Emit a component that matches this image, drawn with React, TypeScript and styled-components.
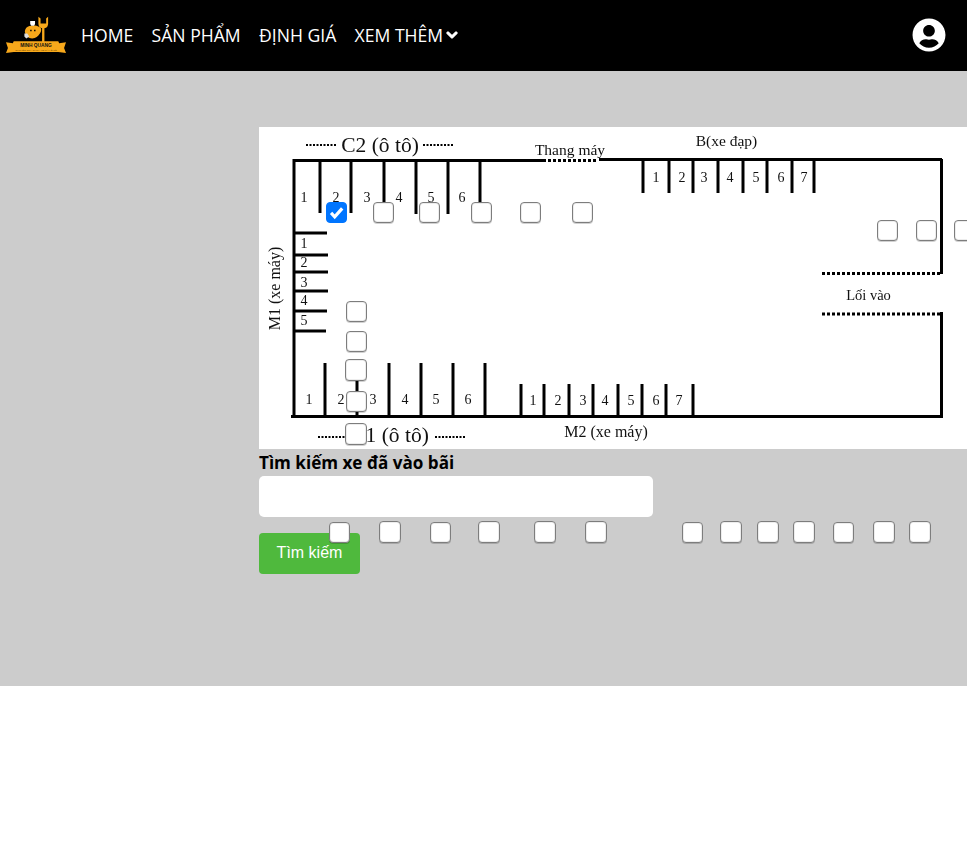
import React from "react";
import styled, { createGlobalStyle } from "styled-components";
import { FaChevronDown, FaUserCircle } from "react-icons/fa";

const Global = createGlobalStyle`
  html, body { margin: 0; padding: 0; background: #fff; overflow: hidden; }
  body { font-family: "Open Sans", "Noto Sans", sans-serif; }
  * { box-sizing: border-box; }
`;

const Page = styled.div`
  position: relative;
  width: 967px;
  height: 857px;
  overflow: hidden;
`;

const Header = styled.header`
  height: 71px;
  background: #000;
  display: flex;
  align-items: center;
  padding: 0 21px 2px 6px;
`;

const Logo = styled.svg`
  width: 60px;
  height: 43px;
  flex: none;
  margin-top: 1px;
`;

const Nav = styled.nav`
  display: flex;
  align-items: center;
  gap: 18.3px;
  margin-left: 15px;
  flex: 1;
`;

const NavLink = styled.a`
  color: #fff;
  font-size: 17.6px;
  line-height: 24px;
  display: inline-flex;
  align-items: center;
  gap: 3px;
  white-space: nowrap;
`;

const NavChevron = styled(FaChevronDown)`
  width: 12px;
  height: 12px;
  stroke: #fff;
  stroke-width: 50px;
`;

const Avatar = styled(FaUserCircle)`
  color: #fff;
  width: 34px;
  height: 34px;
`;

const Main = styled.main`
  height: 615px;
  background: #ccc;
  padding: 56px 0 0 259px;
`;

const Plan = styled.svg`
  display: block;
  width: 708px;
  height: 322px;
  background: #fff;
`;

const PlanLabels = styled.g`
  filter: grayscale(1);
`;

const Title = styled.h3`
  margin: 0;
  height: 27px;
  font-size: 17.1px;
  line-height: 27px;
  font-weight: 700;
  color: #000;
  white-space: nowrap;
`;

const SearchInput = styled.input`
  display: block;
  width: 394px;
  height: 41px;
  border: 0;
  border-radius: 5px;
  background: #fff;
  outline: none;
`;

const SearchButton = styled.button`
  display: block;
  width: 101px;
  height: 41px;
  margin-top: 16px;
  padding: 0 0 1px;
  border: 0;
  border-radius: 4px;
  background: #4fb93d;
  color: #fff;
  font-family: "Liberation Sans", Arial, sans-serif;
  font-size: 16px;
`;

const checkMark = encodeURIComponent(
  `<svg xmlns="http://www.w3.org/2000/svg" viewBox="0 0 21 21"><path d="M4.500 11l4 4.200L16.800 6" fill="none" stroke="#fff" stroke-width="3.600"/></svg>`
);

const Slot = styled.input.attrs<{ $x: number; $y: number; $s?: number }>((p) => ({
  type: "checkbox",
  style: { left: p.$x, top: p.$y, width: p.$s ?? 21, height: p.$s ?? 21 },
}))<{ $x: number; $y: number; $s?: number }>`
  position: absolute;
  margin: 0;
  appearance: none;
  background: #fff;
  border: 1px solid #7d7d7d;
  border-radius: 4px;
  box-shadow: inset 0 0 0 1px rgba(0, 0, 0, 0.07), 0 1px 0 rgba(0, 0, 0, 0.18);

  &:checked {
    background: #0075ff url("data:image/svg+xml,${checkMark}") center / 100% 100% no-repeat;
    border-color: #0075ff;
    box-shadow: none;
  }
`;

const LABEL = "'Liberation Serif', 'Noto Serif', serif";

const Wall = ({ d, w = 3 }: { d: string; w?: number }) => (
  <path d={d} fill="none" stroke="#000" strokeWidth={w} />
);

const Dots = ({ d, w = 3, dash = "3 2" }: { d: string; w?: number; dash?: string }) => (
  <path d={d} fill="none" stroke="#000" strokeWidth={w} strokeDasharray={dash} />
);

const L = ({ x, y, s = 14, children, r }: { x: number; y: number; s?: number; children: React.ReactNode; r?: boolean }) => (
  <text
    x={x}
    y={y}
    fontFamily={LABEL}
    fontSize={s}
    fill="#111"
    textAnchor="middle"
    transform={r ? `rotate(-90 ${x} ${y})` : undefined}
  >
    {children}
  </text>
);

const ox = 259;
const oy = 127;
const vLine = (x: number, y1: number, y2: number) => `M${x - ox} ${y1 - oy}V${y2 - oy}`;
const hLine = (y: number, x1: number, x2: number) => `M${x1 - ox} ${y - oy}H${x2 - ox}`;

const topStalls: [number, number][] = [[320, 213], [351, 213], [384, 205], [416, 214], [448, 214], [480, 205]];
const leftStalls: [number, number][] = [[233, 327], [255, 328], [272, 328], [291, 328], [311, 327], [331, 326]];
const bottomStalls = [325, 357, 389, 421, 453, 485];
const m2Stalls = [521, 544, 569, 593, 618, 642, 666, 693];
const bStalls = [643, 669, 693, 718, 743, 767, 792, 814];

const topNums = [304, 336, 367, 399, 431, 462];
const leftNums = [248, 267, 287, 305, 325];
const bottomNums = [309, 341, 373, 405, 436, 468];
const m2Nums = [533, 558, 583, 605, 631, 656, 679];
const bNums = [656, 682, 704, 730, 756, 781, 804];

type S = { x: number; y: number; s?: number };
const slots: S[] = [
  { x: 373, y: 202 }, { x: 419, y: 202 }, { x: 471, y: 202 }, { x: 520, y: 202 }, { x: 572, y: 202 },
  { x: 877, y: 220 }, { x: 916, y: 220 }, { x: 954, y: 220 },
  { x: 346, y: 301 }, { x: 346, y: 331 }, { x: 345, y: 359, s: 22 }, { x: 346, y: 391 }, { x: 345, y: 423, s: 22 },
  { x: 329, y: 522 }, { x: 379, y: 521, s: 22 }, { x: 430, y: 522 }, { x: 478, y: 521, s: 22 }, { x: 534, y: 521, s: 22 }, { x: 585, y: 521, s: 22 },
  { x: 682, y: 522 }, { x: 720, y: 521, s: 22 }, { x: 757, y: 521, s: 22 }, { x: 793, y: 521, s: 22 }, { x: 833, y: 522 }, { x: 873, y: 521, s: 22 }, { x: 909, y: 521, s: 22 },
];

export default function App() {
  return (
    <Page>
      <Global />
      <Header>
        <Logo viewBox="0 0 62 44" aria-label="logo">
          <path d="M33.500 2.500v7.500a5 5 0 0 0 3.800 4.600V30h2.400V14.600A5 5 0 0 0 43.500 10V2.500l-2 2v5h-5.800v-5z" fill="#f7a81b" />
          <path d="M21 14c3-3 10-3 13-1 3 1 3 4 1 7-2 3-4 5-8 5-4 0-6-2-7-5-1-2-.5-4 1-6z" fill="#f7a81b" />
          <path d="M25 7h5v3l-1 2h-3l-1-2z" fill="#fff" />
          <path d="M25 16h1.500v1.500H25zM29 16h1.500v1.500H29z" fill="#000" />
          <path d="M19 20h3l2 3-3 2-2-2z" fill="#ddd" />
          <path d="M0 29l7 1 1-2h46l1 2 7-1-2 6 2 5-8-1H8l-8 1 2-5z" fill="#f7a81b" />
          <text x="31" y="34" fontFamily="'Liberation Sans', sans-serif" fontSize="5" fontWeight="700" textAnchor="middle" fill="#111">
            MINH QUANG
          </text>
          <text x="31" y="38" fontFamily="'Liberation Sans', sans-serif" fontSize="2.600" textAnchor="middle" fill="#5a3c00">
            CHUYÊN SỬA CHỮA XE MÁY Ô TÔ
          </text>
        </Logo>
        <Nav>
          <NavLink>HOME</NavLink>
          <NavLink>SẢN PHẨM</NavLink>
          <NavLink>ĐỊNH GIÁ</NavLink>
          <NavLink>
            XEM THÊM
            <NavChevron />
          </NavLink>
        </Nav>
        <Avatar />
      </Header>
      <Main>
        <Plan viewBox="0 0 708 322">
          <Wall d={`${hLine(160.5, 293, 546)}${hLine(159.5, 599, 942)}${vLine(294, 159, 417)}${vLine(941.5, 159, 274)}${vLine(941.5, 312, 418)}${hLine(416.5, 291, 943)}`} />
          <Dots d={`${hLine(160.5, 548, 598)}${hLine(273.5, 822, 940)}${hLine(314, 822, 940)}`} />
          <Dots d={`${hLine(145, 306, 336)}${hLine(145, 423, 453)}${hLine(437, 318, 346)}${hLine(437, 435, 465)}`} w={2} dash="2 1.500" />
          {topStalls.map(([x, y]) => <Wall key={x} d={vLine(x, 160, y)} />)}
          {leftStalls.map(([y, x]) => <Wall key={y} d={hLine(y, 294, x)} />)}
          {bottomStalls.map((x) => <Wall key={x} d={vLine(x, 363, 417)} />)}
          {m2Stalls.map((x) => <Wall key={x} d={vLine(x, 384, 417)} />)}
          {bStalls.map((x) => <Wall key={x} d={vLine(x, 160, 193)} />)}

          <PlanLabels>
            {topNums.map((x, i) => <L key={x} x={x - ox} y={202 - oy}>{i + 1}</L>)}
            {leftNums.map((y, i) => <L key={y} x={304 - ox} y={y - oy}>{i + 1}</L>)}
            {bottomNums.map((x, i) => <L key={x} x={x - ox} y={404 - oy}>{i + 1}</L>)}
            {m2Nums.map((x, i) => <L key={x} x={x - ox} y={405 - oy}>{i + 1}</L>)}
            {bNums.map((x, i) => <L key={x} x={x - ox} y={182 - oy}>{i + 1}</L>)}

            <L x={380 - ox} y={152 - oy} s={21.5}>C2 (ô tô)</L>
            <L x={570 - ox} y={155 - oy} s={15.5}>Thang máy</L>
            <L x={726.5 - ox} y={146 - oy} s={15.5}>B(xe đạp)</L>
            <L x={868.5 - ox} y={300 - oy} s={14.5}>Lối vào</L>
            <L x={606 - ox} y={437 - oy} s={16}>M2 (xe máy)</L>
            <L x={390 - ox} y={442 - oy} s={21.5}>C1 (ô tô)</L>
            <L x={280 - ox} y={288.5 - oy} s={16} r>M1 (xe máy)</L>
          </PlanLabels>
        </Plan>
        <Title>Tìm kiếm xe đã vào bãi</Title>
        <SearchInput />
        <SearchButton>Tìm kiếm</SearchButton>
      </Main>
      <Slot $x={326} $y={202} defaultChecked />
      {slots.map((s) => (
        <Slot key={`${s.x}-${s.y}`} $x={s.x} $y={s.y} $s={s.s} />
      ))}
    </Page>
  );
}
